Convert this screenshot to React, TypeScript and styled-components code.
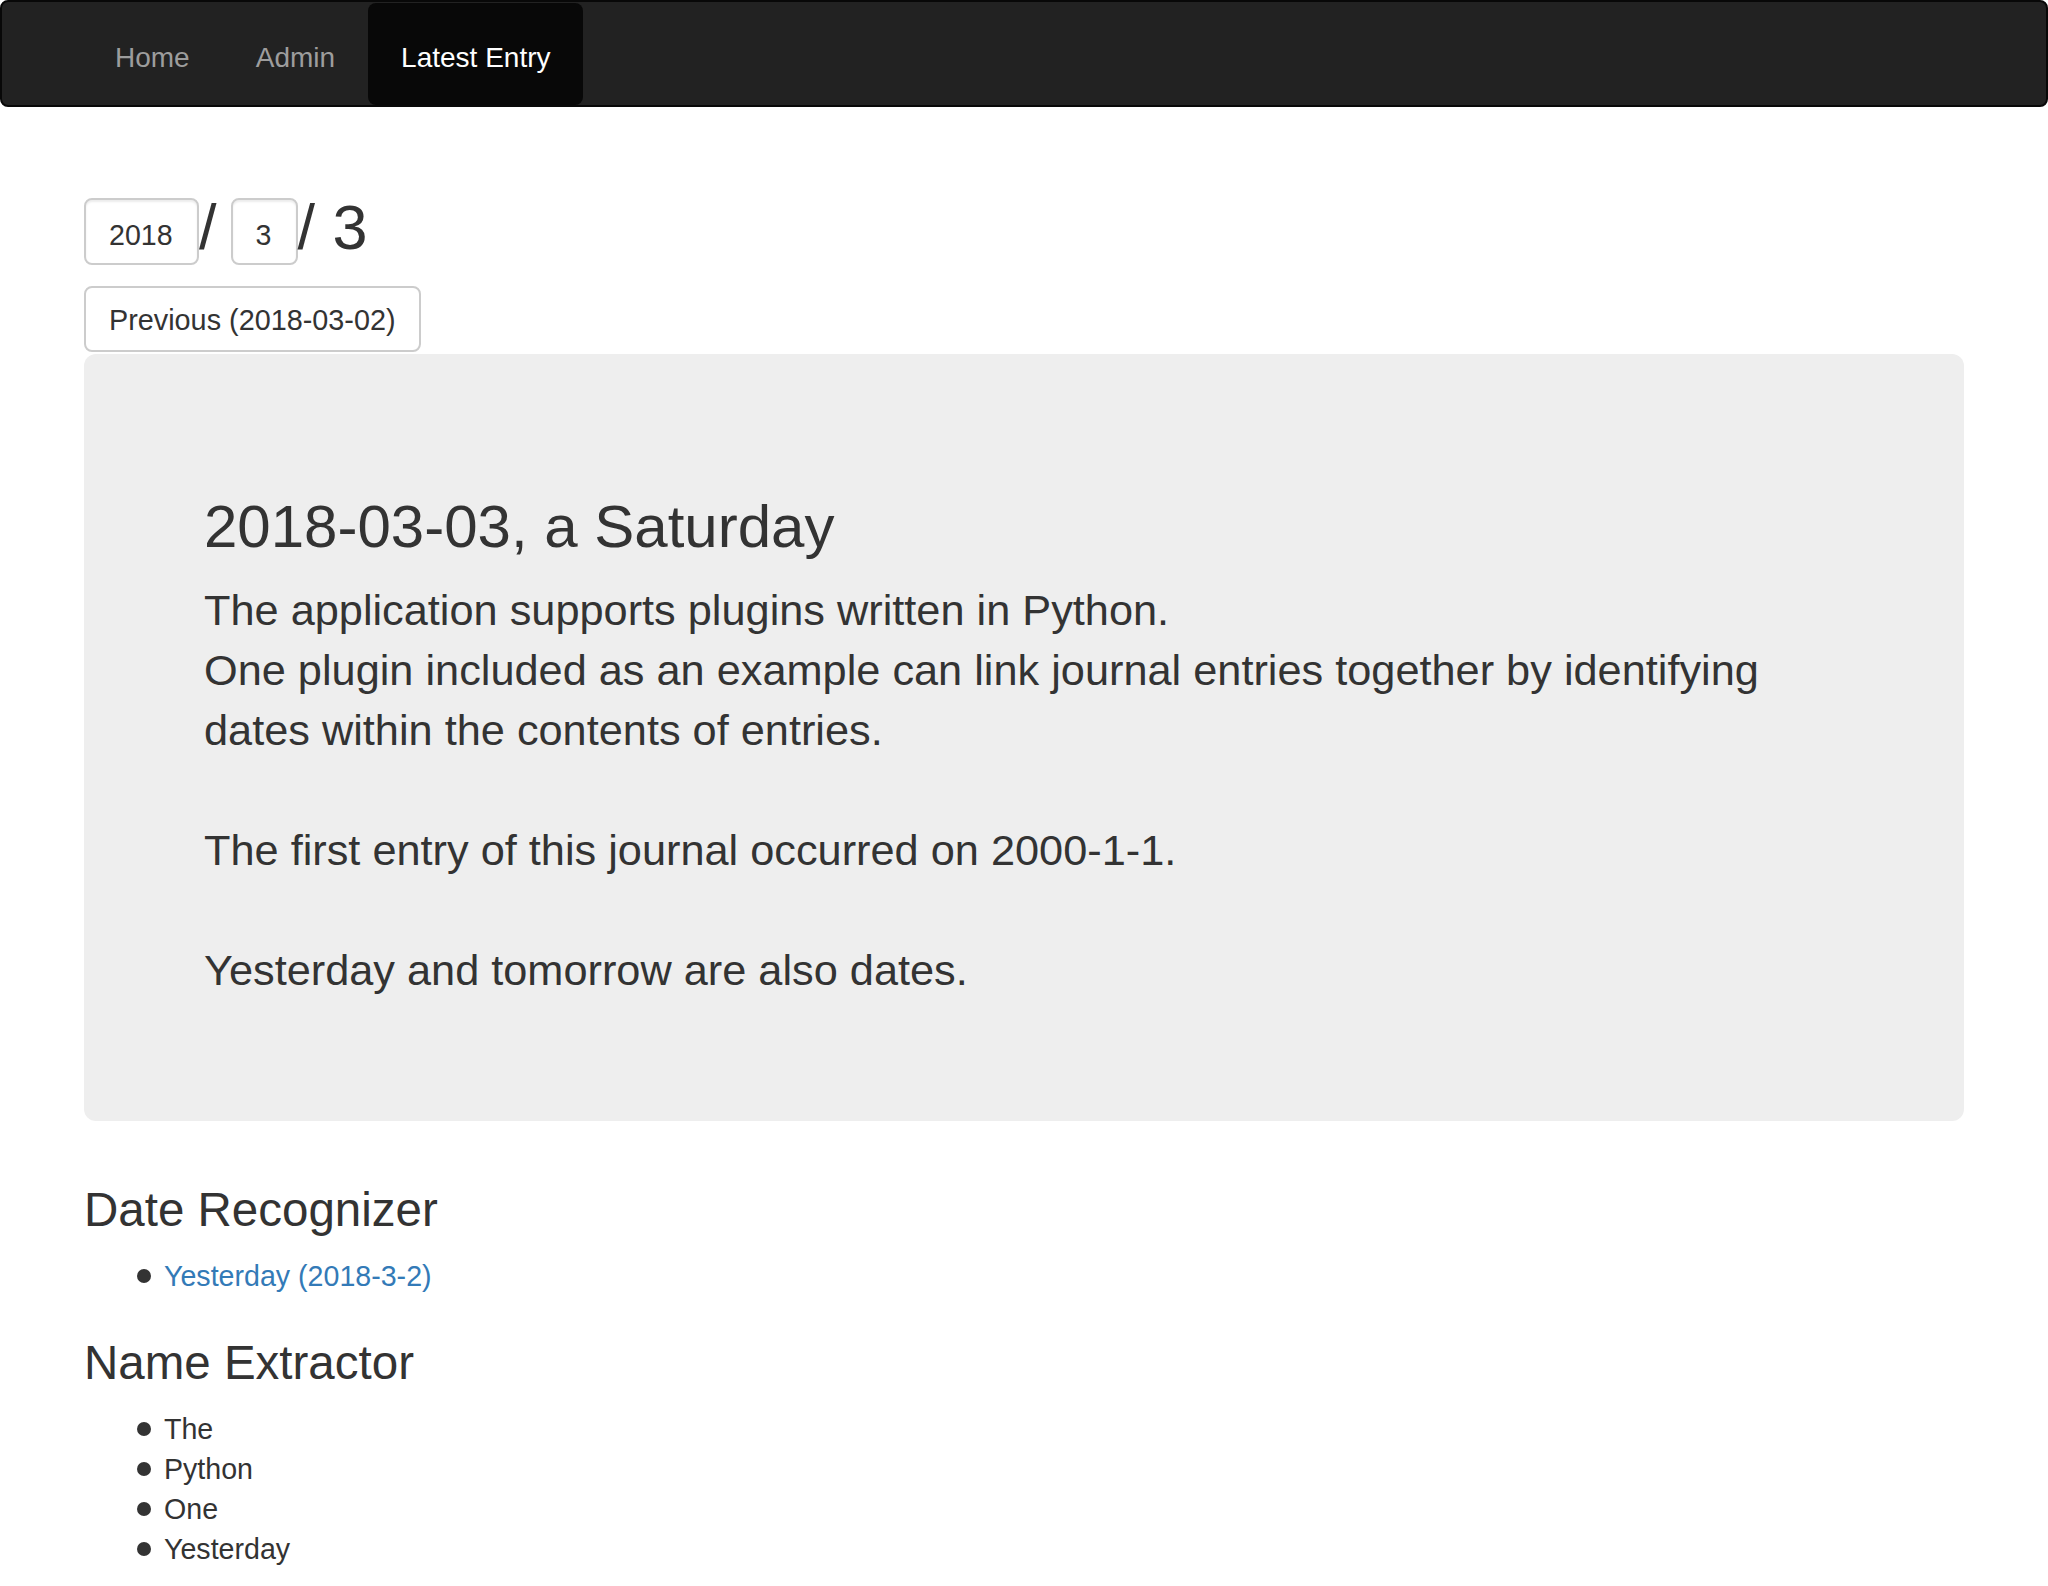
import React from 'react';
import styled, { createGlobalStyle } from 'styled-components';

const GlobalStyle = createGlobalStyle`
  html, body {
    margin: 0;
    padding: 0;
    background: #fff;
  }
  body {
    font-family: "Liberation Sans", Arial, Helvetica, sans-serif;
    font-size: 28.6px;
    line-height: 40px;
    color: #333;
  }
  * {
    box-sizing: border-box;
  }
`;

const navLinks = [
    { label: 'Home', active: false },
    { label: 'Admin', active: false },
    { label: 'Latest Entry', active: true },
];

const names = ['The', 'Python', 'One', 'Yesterday'];

export default function App() {
    return (
        <>
            <GlobalStyle />
            <Navbar>
                <NavList>
                    {navLinks.map((link) => (
                        <NavItem key={link.label}>
                            <NavLink href="#" $active={link.active}>{link.label}</NavLink>
                        </NavItem>
                    ))}
                </NavList>
            </Navbar>
            <Container>
                <DateRow>
                    <DateInput readOnly defaultValue="2018" $width={115} />
                    <Slash>/</Slash>
                    <DateInput readOnly defaultValue="3" $width={67} />
                    <Slash>/ 3</Slash>
                </DateRow>
                <PrevButton type="button">Previous (2018-03-02)</PrevButton>
                <Jumbotron>
                    <EntryTitle>2018-03-03, a Saturday</EntryTitle>
                    <EntryText>
                        The application supports plugins written in Python.<br />
                        One plugin included as an example can link journal entries together by identifying dates within the contents of entries.<br />
                        <br />
                        The first entry of this journal occurred on 2000-1-1.<br />
                        <br />
                        Yesterday and tomorrow are also dates.
                    </EntryText>
                </Jumbotron>
                <PluginTitle>Date Recognizer</PluginTitle>
                <PluginList>
                    <PluginItem><EntryLink href="#">Yesterday (2018-3-2)</EntryLink></PluginItem>
                </PluginList>
                <PluginTitle>Name Extractor</PluginTitle>
                <PluginList>
                    {names.map((n) => <PluginItem key={n}>{n}</PluginItem>)}
                </PluginList>
            </Container>
        </>
    );
}

const Navbar = styled.nav`
  height: 107px;
  background: #222;
  border: 2px solid #080808;
  border-radius: 8px;
  padding-left: 80px;
`

const NavList = styled.ul`
  display: flex;
  margin: 0;
  padding: 0;
  list-style: none;
  height: 100%;
`

const NavItem = styled.li`
  display: flex;
`

const NavLink = styled.a<{ $active: boolean }>`
  display: flex;
  align-items: center;
  padding: 7px 33px 0;
  margin-top: 1px;
  font-size: 28px;
  text-decoration: none;
  color: ${(p) => (p.$active ? '#fff' : '#9d9d9d')};
  background: ${(p) => (p.$active ? '#080808' : 'transparent')};
  border-radius: 8px;
`

const Container = styled.div`
  width: 1880px;
  margin: 0 auto;
  padding-top: 90px;
`

const DateRow = styled.div`
  display: flex;
  align-items: center;
  height: 68px;
`

const DateInput = styled.input<{ $width: number }>`
  width: ${(p) => p.$width}px;
  height: 67px;
  padding: 8px 23px 0;
  font-family: "Liberation Sans", Arial, sans-serif;
  font-size: 28.6px;
  color: #333;
  background: #fff;
  border: 2px solid #ccc;
  border-radius: 8px;
  box-shadow: inset 0 2px 2px rgba(0, 0, 0, 0.075);
  outline: none;
`

const Slash = styled.span`
  font-size: 63px;
  line-height: 64px;
  margin: -8px 14px 0 0;
  color: #333;
  white-space: pre;
`

const PrevButton = styled.button`
  display: block;
  margin-top: 21px;
  height: 66px;
  padding: 2px 23px 0;
  font-family: "Liberation Sans", Arial, sans-serif;
  font-size: 28.8px;
  color: #333;
  background: #fff;
  border: 2px solid #ccc;
  border-radius: 8px;
`

const Jumbotron = styled.div`
  margin: 2px 0 62px;
  padding: 100px 120px 91px;
  background: #eee;
  border-radius: 12px;
`

const EntryTitle = styled.h2`
  margin: 40px 0 20px;
  font-size: 60px;
  line-height: 66px;
  font-weight: 500;
`

const EntryText = styled.p`
  margin: 0 0 30px;
  font-size: 43.3px;
  line-height: 60px;
`

const PluginTitle = styled.h3`
  margin: 40px 0 20px;
  font-size: 47.5px;
  line-height: 53px;
  font-weight: 500;
`

const PluginList = styled.ul`
  margin: 0 0 20px;
  padding-left: 80px;
  list-style: none;
  line-height: 40px;
`

const PluginItem = styled.li`
  display: flex;
  align-items: center;

  &::before {
    content: "";
    flex: none;
    width: 14px;
    height: 14px;
    margin: 0 13px 0 -27px;
    border-radius: 50%;
    background: #333;
  }
`

const EntryLink = styled.a`
  color: #337ab7;
  text-decoration: none;
`
